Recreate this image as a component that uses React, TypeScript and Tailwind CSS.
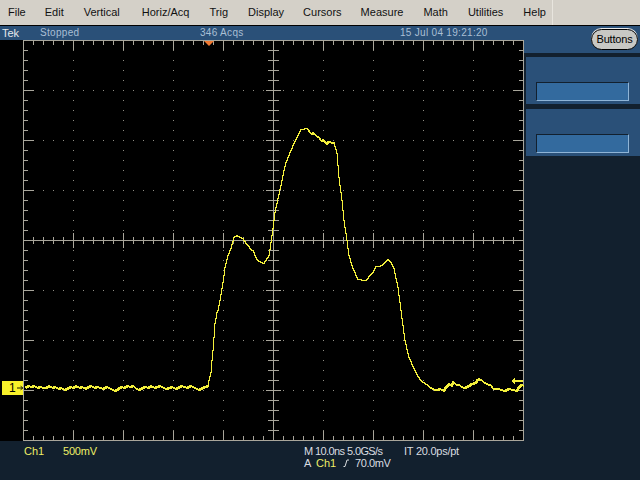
const menuItems = [
  { label: "File", className: "ml-[8px]" },
  { label: "Edit", className: "ml-[19px]" },
  { label: "Vertical", className: "ml-[20px]" },
  { label: "Horiz/Acq", className: "ml-[22px]" },
  { label: "Trig", className: "ml-[20px]" },
  { label: "Display", className: "ml-[20px]" },
  { label: "Cursors", className: "ml-[19px]" },
  { label: "Measure", className: "ml-[19px]" },
  { label: "Math", className: "ml-[20px]" },
  { label: "Utilities", className: "ml-[20px]" },
  { label: "Help", className: "ml-[20px]" },
];

const sans = "font-['Liberation_Sans',Arial,sans-serif]";

// baseline noise, one value per 3px
const noise = [
  387, 385, 386, 385, 387, 386, 387, 387, 385, 387, 386, 388, 387, 389, 388, 386, 387, 385, 387, 386, 388, 386, 385,
  387, 386, 387, 388, 386, 387, 389, 390, 388, 386, 387, 385, 386, 385, 388, 389, 387, 386, 387, 385, 387, 386, 385,
  387, 388, 387, 386, 388, 387, 385, 386, 387, 385, 386, 388, 389, 387, 386, 385,
];

const tracePoints: [number, number][] = [
  [208, 380], [210, 372], [211, 360], [212, 350], [214, 323], [216, 312], [217, 310], [219, 300], [222, 282],
  [224, 267], [227, 255], [230, 248], [233, 237], [236, 235], [239, 237], [242, 238], [245, 243], [247, 245],
  [250, 249], [252, 250], [256, 259], [260, 262], [263, 263], [266, 258], [268, 255], [270, 242], [272, 228],
  [274, 212], [277, 198], [280, 185], [283, 170], [285, 162], [289, 152], [293, 143], [297, 135], [300, 129],
  [306, 128], [310, 133], [312, 132], [315, 135], [318, 137], [320, 140], [322, 139], [325, 143], [327, 141],
  [333, 142], [336, 153], [338, 177], [341, 200], [343, 220], [346, 240], [348, 255], [352, 268], [357, 279],
  [365, 280], [369, 275], [372, 272], [375, 266], [379, 266], [382, 264], [385, 261], [387, 259], [390, 262],
  [393, 268], [397, 287], [400, 310], [404, 340], [408, 357], [413, 368], [417, 376], [420, 380], [424, 383],
  [427, 385], [431, 388], [435, 389], [439, 388], [442, 390], [445, 386], [448, 383], [450, 385], [452, 381],
  [455, 384], [458, 384], [462, 387], [466, 386], [470, 383], [474, 382], [476, 379], [478, 378], [481, 380],
  [485, 383], [489, 384], [492, 388], [497, 388], [500, 389], [503, 390], [508, 388], [512, 389], [515, 390],
  [517, 387], [520, 384], [523, 385],
];

const baselinePoints = noise.map((y, i): [number, number] => [24 + i * 3, y]);

// sampled trace: one y for each pixel column, joined with vertical steps
function stepped(points: [number, number][]) {
  let d = `M${points[0][0] + 0.5} ${points[0][1] + 0.5}`;
  for (let i = 1; i < points.length; i++) {
    const [x0, y0] = points[i - 1];
    const [x1, y1] = points[i];
    for (let x = x0 + 1; x <= x1; x++) {
      const y = Math.round(y0 + ((y1 - y0) * (x - x0)) / (x1 - x0));
      d += ` H${x + 0.5} V${y + 0.5}`;
    }
  }
  return d;
}

const trace = stepped([...baselinePoints, ...tracePoints]);

// second pass where the acquisitions pile up and the trace gets fat
const fuzz = [baselinePoints, tracePoints.slice(36, 46), tracePoints.slice(72)]
  .map((part) => stepped(part.map(([x, y]): [number, number] => [x + 1, y + 1])))
  .join(" ");

const grid = "#a9a69b";

function Graticule() {
  const xs = Array.from({ length: 11 }, (_, i) => 23 + i * 50);
  const ys = Array.from({ length: 9 }, (_, i) => 40 + i * 50);
  const minorX = Array.from({ length: 51 }, (_, i) => 23 + i * 10);
  const minorY = Array.from({ length: 41 }, (_, i) => 40 + i * 10);

  return (
    <svg viewBox="0 40 524 401" width={524} height={401} shapeRendering="crispEdges" className="block">
      {/* dots on the division lines */}
      {ys.slice(1, -1).map((y) =>
        minorX.map((x) => <rect key={`h${x}-${y}`} x={x} y={y} width={1} height={1} fill="#8f8d84" />),
      )}
      {xs.slice(1, -1).map((x) =>
        minorY.map((y) => <rect key={`v${x}-${y}`} x={x} y={y} width={1} height={1} fill="#8f8d84" />),
      )}

      {/* outer frame */}
      <rect x={23.5} y={40.5} width={500} height={400} fill="none" stroke={grid} />

      {/* ticks on frame and on centre cross */}
      {minorX.map((x) => {
        const major = (x - 23) % 50 === 0;
        const len = major ? 9 : 4;
        return (
          <g key={x} fill={grid}>
            <rect x={x} y={41} width={1} height={len} />
            <rect x={x} y={440 - len} width={1} height={len} />
            <rect x={x} y={major ? 233 : 237} width={1} height={major ? 15 : 7} />
          </g>
        );
      })}
      {minorY.map((y) => {
        const major = (y - 40) % 50 === 0;
        const len = major ? 10 : 4;
        return (
          <g key={y} fill={grid}>
            <rect x={24} y={y} width={len} height={1} />
            <rect x={523 - len} y={y} width={len} height={1} />
            <rect x={major ? 266 : 268} y={y} width={major ? 15 : 11} height={1} />
          </g>
        );
      })}
      <rect x={23} y={240} width={500} height={1} fill={grid} />
      <rect x={273} y={40} width={1} height={400} fill={grid} />

      {/* trigger position */}
      <polygon points="204,41 214,41 209,46" fill="#f27a33" shapeRendering="auto" />

      {/* waveform */}
      <path d={fuzz} fill="none" stroke="#f4f03c" strokeWidth={1} />
      <path d={trace} fill="none" stroke="#f4f03c" strokeWidth={1} />

      {/* trigger level arrow */}
      <path d="M511 381 L515 378 V380 H523 V382 H515 V384 Z" fill="#f4f03c" />
    </svg>
  );
}

function SidePanel() {
  return (
    <div className="h-[47px] bg-[#2a5078] flex flex-col justify-end pl-[10px] pr-[11px] pb-[3px]">
      <div className="h-[19px] bg-[#336a9e] border-t border-l border-t-[#12202e] border-l-[#12202e] border-b border-r border-b-[#8fb4d6] border-r-[#8fb4d6]" />
    </div>
  );
}

export default function App() {
  return (
    <div className={`w-[640px] h-[480px] overflow-hidden flex flex-col bg-[#12202e] ${sans}`}>
      {/* menu bar */}
      <div className="h-[26px] shrink-0 bg-[#d4d0c8] flex items-center border-b border-black text-[11px] text-[#111] relative">
        {menuItems.map((item) => (
          <span key={item.label} className={item.className}>
            {item.label}
          </span>
        ))}
        <div className="absolute left-[552px] top-0 bottom-0 w-px bg-[#e8e5de]" />
      </div>

      <div className="flex flex-1 min-h-0">
        {/* scope column */}
        <div className="w-[524px] shrink-0 flex flex-col">
          <div className="h-[14px] bg-[#2a5078] flex items-center text-[10px] leading-none text-[#a9bfd4] tracking-[0.3px]">
            <span className="ml-[2px] w-[38px] text-[11px] tracking-normal text-[#e4e8ec]">Tek</span>
            <span className="w-[160px]">Stopped</span>
            <span className="w-[200px]">346 Acqs</span>
            <span>15 Jul 04 19:21:20</span>
          </div>

          <div className="relative bg-black h-[401px]">
            <Graticule />
            <div className="absolute left-[2px] top-[341px] w-[21px] h-[14px] bg-[#f8f02a] flex items-center text-[12px] leading-none text-black">
              <span className="ml-[7px]">1</span>
              <svg width={7} height={6} viewBox="0 0 7 6" className="ml-[1px]">
                <path d="M0 3 H6 M4 1 L6.5 3 L4 5" fill="none" stroke="#000" strokeWidth={1} />
              </svg>
            </div>
          </div>

          {/* readouts */}
          <div className="flex-1 flex text-[11px] leading-[12px] pt-[4px]">
            <div className="ml-[24px] w-[280px] flex text-[#eeee66]">
              <span className="w-[39px]">Ch1</span>
              <span className="tracking-[-0.2px]">500mV</span>
            </div>
            <div className="text-[#d9dde0]">
              <div className="flex">
                <span className="w-[100px] tracking-[-0.6px]">M 10.0ns 5.0GS/s</span>
                <span className="tracking-[-0.25px]">IT 20.0ps/pt</span>
              </div>
              <div className="flex items-center">
                <span className="w-[12px]">A</span>
                <span className="w-[27px] text-[#eeee66]">Ch1</span>
                <svg width={6} height={8} viewBox="0 0 6 8" className="mr-[6px]">
                  <path d="M0.5 7.5 H2 L4 1 H6" fill="none" stroke="#d9dde0" strokeWidth={1} />
                </svg>
                <span className="tracking-[-0.4px]">70.0mV</span>
              </div>
            </div>
          </div>
        </div>

        {/* right column */}
        <div className="flex-1 flex flex-col">
          <div className="h-[27px] bg-[#2a5078] flex items-start justify-end pr-[2px] pt-[3px]">
            <button
              type="button"
              className="w-[47px] h-[21px] rounded-[11px] bg-[#c8c8c4] border border-black shadow-[0_-1px_0_#e8e8e8] text-[11px] tracking-[-0.2px] leading-none text-black"
            >
              Buttons
            </button>
          </div>
          <div className="ml-[2px] mt-[4px] flex flex-col gap-[5px]">
            <SidePanel />
            <SidePanel />
          </div>
        </div>
      </div>
    </div>
  );
}
